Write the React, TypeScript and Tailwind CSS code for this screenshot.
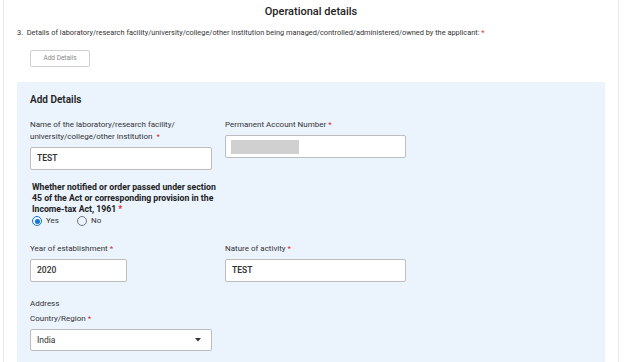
import React from "react";

const font = { fontFamily: "Roboto, 'Noto Sans', sans-serif" };

function Star() {
  return <span className="text-[#d32f2f]"> *</span>;
}

function Field({ value, className, bold }: { value: string; className: string; bold?: boolean }) {
  return (
    <div
      className={`h-[23px] bg-white border border-[#bdbdbd] rounded-[2px] flex items-center pl-[6px] text-[8.5px] text-[#333] ${bold ? "font-semibold" : "font-medium"} ${className}`}
    >
      {value}
    </div>
  );
}

export default function App() {
  return (
    <div className="h-[362px] w-[624px] overflow-hidden bg-white pl-[3px] pr-[5px] flex" style={font}>
      <div className="flex-1 border-l border-r border-[#e6e6ee] px-[13px] flex flex-col">
        <div className="h-[24px] leading-[24px] text-center text-[11px] font-medium text-[#222]">
          Operational details
        </div>
        <div className="mt-[4px] leading-[10px] text-[7.4px] text-[#333] whitespace-nowrap">
          3.&nbsp; Details of laboratory/research facility/university/college/other institution being managed/controlled/administered/owned by the applicant:
          <Star />
        </div>
        <div className="mt-[12px] ml-[13px] w-[60px] h-[17px] border border-[#d0d0d0] rounded-[2px] flex items-center justify-center text-[6.5px] text-[#888]">
          Add Details
        </div>

        <div className="mt-[15px] flex-1 bg-[#ebf3fd] pl-[13px] pr-[13px] pt-[11px]">
          <div className="leading-[14px] text-[10px] font-semibold text-[#222]">Add Details</div>

          <div className="mt-[12px] grid grid-cols-[182px_181px] gap-x-[13px] items-start text-[8px] text-[#333]">
            <div>
              <div className="leading-[12px] whitespace-nowrap">
                Name of the laboratory/research facility/
                <br />
                university/college/other institution&nbsp;
                <Star />
              </div>
              <Field value="TEST" bold className="mt-[4px]" />
            </div>
            <div>
              <div className="leading-[12px]">
                Permanent Account Number
                <Star />
              </div>
              <div className="mt-[4px] h-[23px] bg-white border border-[#bdbdbd] rounded-[2px] flex items-center pl-[5px]">
                <div className="w-[68px] h-[14px] bg-[#d0d0d0]" />
              </div>
            </div>
          </div>

          <div className="mt-[12px] pl-[2px] leading-[11px] text-[8.7px] font-bold text-[#222] whitespace-nowrap">
            Whether notified or order passed under section
            <br />
            45 of the Act or corresponding provision in the
            <br />
            Income-tax Act, 1961
            <Star />
          </div>
          <div className="pl-[2px] h-[12px] flex items-center text-[8px] text-[#333]">
            <div className="w-[10px] h-[10px] rounded-full border border-[#1976d2] flex items-center justify-center">
              <div className="w-[5px] h-[5px] rounded-full bg-[#1976d2]" />
            </div>
            <span className="ml-[4px] w-[31px]">Yes</span>
            <div className="w-[10px] h-[10px] rounded-full border border-[#777]" />
            <span className="ml-[4px]">No</span>
          </div>

          <div className="mt-[16px] grid grid-cols-[182px_181px] gap-x-[13px] items-start text-[8px] text-[#333]">
            <div>
              <div className="leading-[12px]">
                Year of establishment
                <Star />
              </div>
              <Field value="2020" className="mt-[4px] w-[97px]" />
            </div>
            <div>
              <div className="leading-[12px]">
                Nature of activity
                <Star />
              </div>
              <Field value="TEST" bold className="mt-[4px]" />
            </div>
          </div>

          <div className="mt-[16px] leading-[12px] text-[8px] text-[#333]">Address</div>
          <div className="mt-[3px] leading-[12px] text-[8px] text-[#333]">
            Country/Region
            <Star />
          </div>
          <div className="mt-[4px] w-[182px] h-[22px] bg-white border border-[#bdbdbd] rounded-[2px] flex items-center justify-between pl-[6px] pr-[10px] text-[8.5px] text-[#333]">
            <span>India</span>
            <svg width="6" height="4" viewBox="0 0 6 4">
              <path d="M0 0 L6 0 L3 3.5 Z" fill="#333" />
            </svg>
          </div>
        </div>
      </div>
    </div>
  );
}
